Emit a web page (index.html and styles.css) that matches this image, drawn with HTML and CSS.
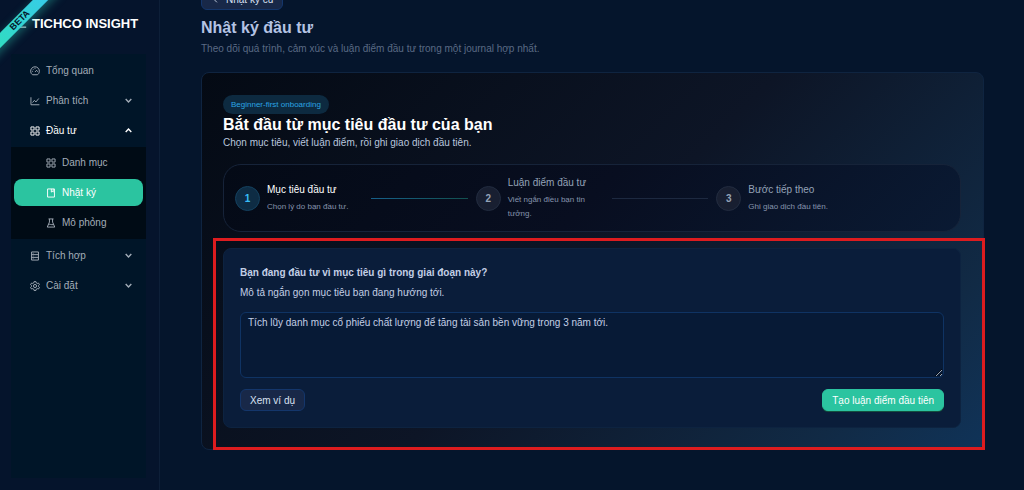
FILE: index.html
```html
<!DOCTYPE html>
<html lang="vi">
<head>
<meta charset="UTF-8" />
<meta name="viewport" content="width=device-width, initial-scale=1.0" />
<title>Nhật ký đầu tư</title>
<link rel="stylesheet" href="styles.css">
</head>
<body>

<!-- shared icons -->
<svg class="sprite" aria-hidden="true">
  <symbol id="i-grid" viewBox="0 0 16 16"><path d="M1.5 1.5h5v5h-5zM9.500 1.500h5v5h-5zM1.500 9.500h5v5h-5zM9.500 9.500h5v5h-5z"/></symbol>
  <symbol id="i-down" viewBox="0 0 16 16"><path d="M3 5.500l5 5 5-5"/></symbol>
  <symbol id="i-up" viewBox="0 0 16 16"><path d="M3 10.500l5-5 5 5"/></symbol>
</svg>

<div class="layout">

  <!-- ===== SIDEBAR ===== -->
  <aside class="sidebar">
    <div class="brand">
      <svg class="brand-mark" viewBox="0 0 12 12"><path d="M3 2v8.500h7"/></svg>
      <span>TICHCO INSIGHT</span>
    </div>
    <nav class="menu">
      <a href="#" class="item">
        <svg class="icon" viewBox="0 0 16 16"><path d="M4 14A7 7 0 1 1 12 14zM8 9.500l3-3M8 3v1.500M3 8.500h1.500M11.500 8.500H13M4.600 5l1 1"/></svg>
        <span>Tổng quan</span>
      </a>
      <a href="#" class="item">
        <svg class="icon" viewBox="0 0 16 16"><path d="M1.500 2v12h13.500M4 10.500l3-3.500 2.500 2.500L14 4"/></svg>
        <span>Phân tích</span>
        <svg class="arrow"><use href="#i-down"/></svg>
      </a>
      <a href="#" class="item open">
        <svg class="icon"><use href="#i-grid"/></svg>
        <span>Đầu tư</span>
        <svg class="arrow"><use href="#i-up"/></svg>
      </a>
      <div class="submenu">
        <a href="#" class="item">
          <svg class="icon"><use href="#i-grid"/></svg>
          <span>Danh mục</span>
        </a>
        <a href="#" class="item selected">
          <svg class="icon" viewBox="0 0 16 16"><path d="M2.500 1.500h11v13h-11zM8.500 1.500v5l1.500-1.200 1.500 1.200v-5"/></svg>
          <span>Nhật ký</span>
        </a>
        <a href="#" class="item">
          <svg class="icon" viewBox="0 0 16 16"><path d="M4 1.500h8M5.500 1.500v5L2 14.500h12l-3.500-8v-5M4 10.500c2-1.500 4 1 8 0"/></svg>
          <span>Mô phỏng</span>
        </a>
      </div>
      <a href="#" class="item">
        <svg class="icon" viewBox="0 0 16 16"><path d="M2.500 1.500h11v13h-11zM2.500 5.800h11M2.500 10.200h11M4.500 3.700h1M4.500 8h1M4.500 12.300h1"/></svg>
        <span>Tích hợp</span>
        <svg class="arrow"><use href="#i-down"/></svg>
      </a>
      <a href="#" class="item">
        <svg class="icon" viewBox="0 0 16 16"><path d="M6.500 1h3l.5 2 1.600.9 2-.6 1.500 2.600L13.600 7.300v1.500l1.500 1.400-1.500 2.600-2-.6-1.600.9-.5 2h-3l-.5-2-1.600-.9-2 .6L.9 10.200l1.500-1.400V7.300L.9 5.900l1.500-2.600 2 .6L6 3z"/><circle cx="8" cy="8" r="2.500"/></svg>
        <span>Cài đặt</span>
        <svg class="arrow"><use href="#i-down"/></svg>
      </a>
    </nav>
  </aside>
  <div class="ribbon">BETA</div>

  <!-- ===== CONTENT ===== -->
  <main class="main">
    <button type="button" class="btn back">
      <svg class="arrow" viewBox="0 0 16 16"><path d="M10.500 3l-5 5 5 5"/></svg>
      Nhật ký cũ
    </button>
    <h1>Nhật ký đầu tư</h1>
    <p class="lead">Theo dõi quá trình, cảm xúc và luận điểm đầu tư trong một journal hợp nhất.</p>

    <section class="card">
      <span class="pill">Beginner-first onboarding</span>
      <h2>Bắt đầu từ mục tiêu đầu tư của bạn</h2>
      <p class="sub">Chọn mục tiêu, viết luận điểm, rồi ghi giao dịch đầu tiên.</p>

      <ol class="steps">
        <li class="step active">
          <span class="num">1</span>
          <div class="step-text">
            <h3>Mục tiêu đầu tư</h3>
            <p>Chọn lý do bạn đầu tư.</p>
          </div>
          <span class="line"></span>
        </li>
        <li class="step">
          <span class="num">2</span>
          <div class="step-text">
            <h3>Luận điểm đầu tư</h3>
            <p>Viết ngắn điều bạn tin tưởng.</p>
          </div>
          <span class="line"></span>
        </li>
        <li class="step">
          <span class="num">3</span>
          <div class="step-text">
            <h3>Bước tiếp theo</h3>
            <p>Ghi giao dịch đầu tiên.</p>
          </div>
        </li>
      </ol>

      <form class="goal">
        <label for="goal">Bạn đang đầu tư vì mục tiêu gì trong giai đoạn này?</label>
        <p>Mô tả ngắn gọn mục tiêu bạn đang hướng tới.</p>
        <textarea id="goal">Tích lũy danh mục cổ phiếu chất lượng để tăng tài sản bền vững trong 3 năm tới.</textarea>
        <div class="actions">
          <button type="button" class="btn">Xem ví dụ</button>
          <button type="submit" class="btn primary">Tạo luận điểm đầu tiên</button>
        </div>
      </form>

      <div class="highlight"></div>
    </section>
  </main>
</div>

</body>
</html>
```
FILE: styles.css
```css
:root{
  --page:#05152c;
  --menu:#001528;
  --submenu:#000b15;
  --green:#2bc4a0;
  --line:#0f3363;
  --text:#c3cfe6;
}
*{box-sizing:border-box;}
body{
  margin:0;background:var(--page);color:var(--text);
  font-family:"Liberation Sans",Arial,sans-serif;
  font-size:10px;line-height:15px;
}
h1,h2,h3,p,ol{margin:0;padding:0;}
a{color:inherit;text-decoration:none;}
svg{fill:none;stroke:currentColor;}
.sprite{display:none;}
.layout{display:flex;min-height:100vh;position:relative;overflow:hidden;}

/* sidebar */
.sidebar{
  width:160px;flex:none;padding:12px 13px 12px 11px;
  display:flex;flex-direction:column;
  background:#05142c;border-right:1px solid #0d1f38;
}
.brand{
  display:flex;align-items:center;gap:4px;height:22px;
  margin:0 0 20px 6px;
  font-size:13px;font-weight:700;color:#fff;white-space:nowrap;
}
.brand-mark{width:11px;height:14px;flex:none;}
.menu{
  flex:1;display:flex;flex-direction:column;gap:3px;
  padding-top:3px;background:var(--menu);color:#a3adb8;
}
.item{
  display:flex;align-items:center;gap:6px;
  height:27px;margin:0 3px;padding:0 10px 0 16px;border-radius:8px;
}
.icon{width:10px;height:10px;flex:none;stroke-width:1.5;}
.arrow{width:9px;height:9px;margin-left:auto;stroke-width:2.5;}
.item.open{color:#fff;}
.submenu{
  display:flex;flex-direction:column;gap:3px;
  padding:2px 0 3px;background:var(--submenu);
}
.submenu .item{padding-left:32px;}
.item.selected{background:var(--green);color:#fff;}

/* corner ribbon */
.ribbon{
  position:absolute;top:15px;left:-30px;width:100px;height:11px;
  transform:rotate(-45deg);
  background:linear-gradient(90deg,#2fe0b8,#38c8f0);
  box-shadow:0 3px 10px rgba(45,212,191,.4);
  color:#04162b;font-size:9px;font-weight:700;line-height:11px;text-align:center;
}

/* content */
.main{flex:1;min-width:0;padding:0 40px 30px 41px;}
.btn{
  display:inline-flex;align-items:center;justify-content:center;
  height:22px;padding:0 9px;
  border:1px solid #14366b;border-radius:6px;
  background:#182848;color:#d8e1f2;
  font:inherit;cursor:pointer;
}
.btn.primary{background:var(--green);border-color:var(--green);color:#fff;box-shadow:0 1px 0 #14503f;}
.back{display:flex;gap:6px;margin:-12px 0 7px;}
.back .arrow{margin-left:0;stroke-width:1.5;}
h1{font-size:16px;line-height:22px;color:#b4c3e4;}
.lead{margin-top:2px;color:#5a6a84;}

/* onboarding card */
.card{
  position:relative;margin-top:16px;padding:22px 22px 21px 21px;
  border:1px solid #0f2440;border-radius:8px;
  background:linear-gradient(135deg,#040a14 0%,#0d1526 50%,#112a45 85%,#103358 100%);
}
.pill{
  display:table;padding:2px 8px;border-radius:10px;
  background:#0d2a40;color:#2ba5e3;font-size:8px;
}
h2{font-size:16px;line-height:21px;color:#fff;}
.sub{color:#b9c6de;}

.steps{
  display:grid;grid-template-columns:repeat(3,1fr);gap:8px;
  margin:14px 0 16px;padding:10px 11px;
  border:1px solid #162339;border-radius:18px;
  background:linear-gradient(135deg,#040a16,#080e20 50%,#0a1a33);
  list-style:none;
}
.step{display:flex;align-items:center;gap:7px;}
.num{
  width:25px;height:25px;flex:none;border-radius:50%;
  border:1px solid #222c40;background:#181f31;color:#94a3b8;
  font-weight:700;line-height:23px;text-align:center;
}
.step-text{flex:1;}
h3{font-size:10px;font-weight:400;line-height:16px;color:#94a3b8;}
.step p{margin-top:2px;font-size:8px;line-height:14px;color:#8694ad;}
.line{flex:1;height:1px;background:#1d2940;}
.active .num{background:#0e2c44;border-color:#14415f;color:#38bdf8;}
.active h3{color:#fff;}
.active .line{background:linear-gradient(90deg,#16608a,#12504f);}

/* goal form */
.goal{
  display:flex;flex-direction:column;padding:16px;
  border:1px solid #0d2340;border-radius:8px;
  background:#0a1d3a;
}
.goal label{font-weight:700;}
.goal p{margin:5px 0 12px;}
.goal textarea{
  height:66px;padding:2px 7px;resize:vertical;
  border:1px solid var(--line);border-radius:6px;
  background:#071a36;color:var(--text);font:inherit;
}
.actions{display:flex;justify-content:space-between;margin-top:11px;}

/* attention frame around the form */
.highlight{
  position:absolute;top:165px;right:-2px;bottom:-1px;left:11px;
  border:3px solid #dd1c1f;pointer-events:none;
}
```
